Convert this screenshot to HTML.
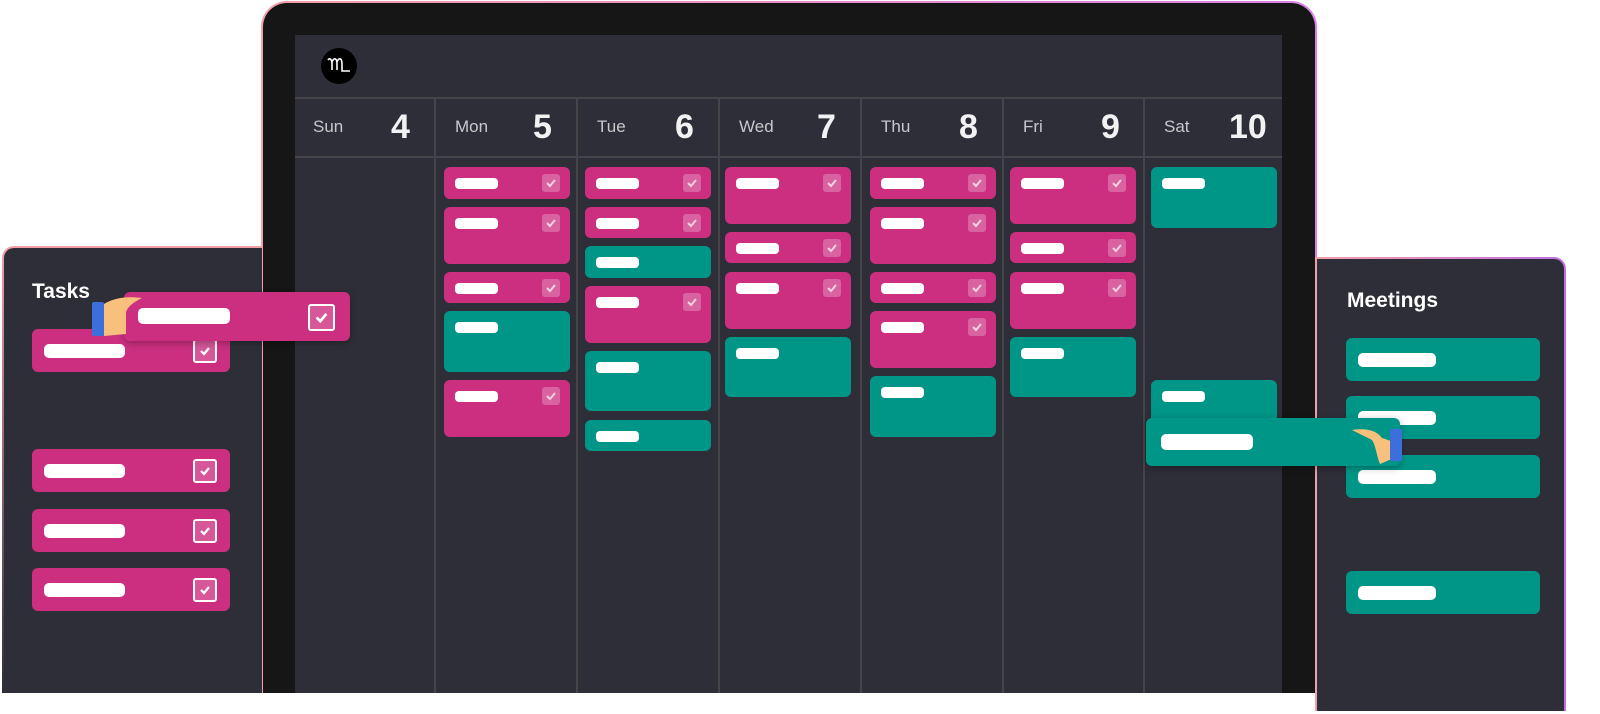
<!DOCTYPE html>
<html><head><style>
*{margin:0;padding:0;box-sizing:border-box}
body{width:1600px;height:714px;background:#fff;position:relative;overflow:hidden;font-family:"Liberation Sans",sans-serif}
.a{position:absolute}
.frame{left:261px;top:1px;width:1056px;height:692px;border-radius:26px 26px 0 0;background:linear-gradient(90deg,#f4a0a8,#d980e6);padding:2px 2px 0 2px}
.frame>div{width:100%;height:100%;background:#161616;border-radius:24px 24px 0 0}
.screen{left:295px;top:35px;width:987px;height:658px;background:#2e2e38}
.hl{background:#454549}
.day{color:#c8c8cc;font-size:17px}
.num{color:#f2f2f2;font-size:34px;font-weight:bold}
.c{position:absolute;border-radius:6px}
.p{background:#cc2f80}.t{background:#009687}
.c .b{position:absolute;left:11px;top:11px;width:43px;height:11px;background:#fff;border-radius:4px}
.c .k{position:absolute;right:10px;top:7px;width:18px;height:18px;border-radius:3px;background:rgba(255,255,255,.25)}
.k svg,.bk svg{position:absolute;left:3px;top:3px}
.panel{background:#2e2e38}
.lc{position:absolute;border-radius:6px;height:43px}
.lc .b{position:absolute;left:12px;top:15px;height:14px;width:81px;background:#fff;border-radius:5px}
.bk{position:absolute;width:24px;height:24px;border:2px solid #fff;border-radius:3px;background:rgba(255,255,255,.2)}
h2{position:absolute;color:#fff;font-size:21px;font-weight:bold}
</style></head><body>
<div class="a frame"><div></div></div>
<div class="a screen">
 <div class="a" style="left:26px;top:13px;width:36px;height:36px;border-radius:50%;background:#000">
  <svg width="36" height="36" viewBox="0 0 36 36"><path d="M7 12c2-3 4 0 4 4l0 6M11 14c2-5 5-4 5 2v6M16 14c2-5 5-4 5 2v7h8" fill="none" stroke="#fff" stroke-width="1.6"/></svg>
 </div>
 <div class="a hl" style="left:0;top:62px;width:987px;height:2px"></div>
 <div class="a hl" style="left:0;top:121px;width:987px;height:2px"></div>
</div>
<div class="a hl" style="left:434px;top:97px;width:2px;height:596px"></div>
<div class="a hl" style="left:576px;top:97px;width:2px;height:596px"></div>
<div class="a hl" style="left:718px;top:97px;width:2px;height:596px"></div>
<div class="a hl" style="left:860px;top:97px;width:2px;height:596px"></div>
<div class="a hl" style="left:1002px;top:97px;width:2px;height:596px"></div>
<div class="a hl" style="left:1143px;top:97px;width:2px;height:596px"></div>
<div class="a day" style="left:313px;top:117px">Sun</div><div class="a num" style="left:391px;top:108px">4</div>
<div class="a day" style="left:455px;top:117px">Mon</div><div class="a num" style="left:533px;top:108px">5</div>
<div class="a day" style="left:597px;top:117px">Tue</div><div class="a num" style="left:675px;top:108px">6</div>
<div class="a day" style="left:739px;top:117px">Wed</div><div class="a num" style="left:817px;top:108px">7</div>
<div class="a day" style="left:881px;top:117px">Thu</div><div class="a num" style="left:959px;top:108px">8</div>
<div class="a day" style="left:1023px;top:117px">Fri</div><div class="a num" style="left:1101px;top:108px">9</div>
<div class="a day" style="left:1164px;top:117px">Sat</div><div class="a num" style="left:1229px;top:108px">10</div>
<div id="cards"></div>
<script>
var ck='<div class="k"><svg width="12" height="12" viewBox="0 0 12 12"><path d="M2 6l3 3 5-6" fill="none" stroke="rgba(255,255,255,.7)" stroke-width="2"/></svg></div>';
var cols={444:[['p',167,199],['p',207,264],['p',272,303],['t',311,372],['p',380,437]],
585:[['p',167,199],['p',207,238],['t',246,278],['p',286,343],['t',351,411],['t',420,451]],
725:[['p',167,224],['p',232,263],['p',272,329],['t',337,397]],
870:[['p',167,199],['p',207,264],['p',272,303],['p',311,368],['t',376,437]],
1010:[['p',167,224],['p',232,263],['p',272,329],['t',337,397]],
1151:[['t',167,228],['t',380,430]]};
var h='';for(var x in cols)cols[x].forEach(function(c){h+='<div class="c '+c[0]+'" style="left:'+x+'px;top:'+c[1]+'px;width:126px;height:'+(c[2]-c[1])+'px"><div class="b"></div>'+(c[0]=='p'?ck:'')+'</div>';});
document.getElementById('cards').innerHTML=h;
</script>
<div class="a" style="left:2px;top:246px;width:260px;height:447px;border-radius:12px 0 0 0;background:linear-gradient(#f2a0a8,#2e2e38);padding:2px 0 0 2px"><div class="panel" style="width:100%;height:100%;border-radius:10px 0 0 0"></div></div>
<h2 style="left:32px;top:280px">Tasks</h2>
<div class="a" style="left:1315px;top:257px;width:251px;height:454px;border-radius:0 12px 0 0;background:linear-gradient(90deg,#f2a0a8,#c070e0);padding:2px 2px 0 2px"><div class="panel" style="width:100%;height:100%;border-radius:0 10px 0 0"></div></div>
<h2 style="left:1347px;top:289px">Meetings</h2>
<div id="lp"></div>
<script>
var cb='<svg width="14" height="14" viewBox="0 0 14 14"><path d="M3 7l3 3 5-6" fill="none" stroke="#fff" stroke-width="2.2"/></svg>';
var s='';[329,449,509,568].forEach(function(y){s+='<div class="lc p" style="left:32px;top:'+y+'px;width:198px"><div class="b"></div><div class="bk" style="left:161px;top:10px">'+cb+'</div></div>';});
[338,396,455,571].forEach(function(y){s+='<div class="lc t" style="left:1346px;top:'+y+'px;width:194px"><div class="b" style="width:78px"></div></div>';});
document.getElementById('lp').innerHTML=s;
</script>
<div class="lc p" style="left:124px;top:292px;width:226px;height:49px;box-shadow:0 2px 8px rgba(0,0,0,.3)"><div class="b" style="left:14px;top:16px;width:92px;height:16px"></div><div class="bk" style="left:184px;top:12px;width:27px;height:27px"><svg width="17" height="17" viewBox="0 0 14 14"><path d="M3 7l3 3 5-6" fill="none" stroke="#fff" stroke-width="2.2"/></svg></div></div>
<svg class="a" style="left:90px;top:294px" width="60" height="46"><path d="M14 10 C24 4 36 2 52 4 C44 8 38 12 36 18 L36 40 L14 42Z" fill="#f8c07c"/><rect x="2" y="8" width="12" height="34" rx="2" fill="#3d6fdb"/></svg>
<div class="lc t" style="left:1146px;top:418px;width:254px;height:48px;box-shadow:0 2px 8px rgba(0,0,0,.3)"><div class="b" style="left:15px;top:16px;width:92px;height:16px"></div></div>
<svg class="a" style="left:1350px;top:420px" width="56" height="46"><path d="M2 10 C16 8 26 10 32 18 L44 22 L44 38 L30 44 C26 34 26 26 22 20 Z" fill="#f8c07c"/><rect x="40" y="9" width="12" height="32" rx="2" fill="#3d6fdb"/></svg>
</body></html>
